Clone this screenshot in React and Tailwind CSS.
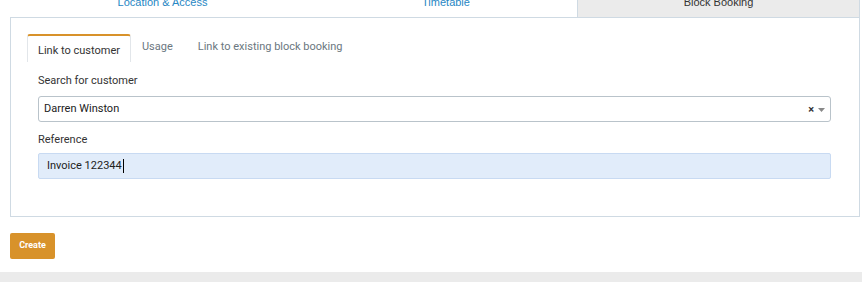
function TopTabs() {
  return (
    <div className="flex h-[17px] overflow-hidden ml-[10px] mr-[2px] font-['Liberation_Sans',Arial,sans-serif] text-[11px]">
      <div className="w-[305px] flex justify-center">
        <span className="mt-[-5px] leading-[14px] text-[#2787c4]">Location &amp; Access</span>
      </div>
      <div className="w-[262px] flex justify-center">
        <span className="mt-[-5px] leading-[14px] text-[#2787c4]">Timetable</span>
      </div>
      <div className="flex-1 flex justify-center bg-[#ebebeb] border-x border-[#cfdae3]">
        <span className="mt-[-5px] leading-[14px] text-[#333]">Block Booking</span>
      </div>
    </div>
  );
}

function InnerTabs() {
  return (
    <div className="flex items-start h-[28px] text-[11px]">
      <div className="h-[28px] px-[10px] bg-white border-t-2 border-x border-t-[#d8922a] border-x-[#e2e6ea] rounded-t-[3px] text-[#333] leading-[26px] pt-[2px]">
        Link to customer
      </div>
      <div className="pl-[11px] pr-[12px] text-[#6b7780] leading-[26px]">Usage</div>
      <div className="pl-[13px] text-[#6b7780] leading-[26px]">Link to existing block booking</div>
    </div>
  );
}

export default function App() {
  return (
    <div className="w-[862px] h-[282px] bg-white overflow-hidden font-['Roboto',sans-serif]">
      <TopTabs />
      <div className="ml-[10px] mr-[2px] border border-[#cfdae3] pt-[16px] px-[16px] pb-[37px]">
        <InnerTabs />
        <div className="pl-[11px] pr-[12px] pt-[11px] text-[11px]">
          <div className="leading-[16px] text-[#333]">Search for customer</div>
          <div className="mt-[7px] h-[26px] flex items-center border border-[#b9c3ca] rounded-[3px] pl-[5px] pr-[5px] text-[#222]">
            <span className="flex-1">Darren Winston</span>
            <span className="text-[11px] font-bold text-[#333] leading-none mr-[4px]">×</span>
            <svg width="7" height="4" viewBox="0 0 7 4" className="mt-[1px]">
              <path d="M0 0h7L3.5 4z" fill="#888" />
            </svg>
          </div>
          <div className="mt-[10px] leading-[16px] text-[#333]">Reference</div>
          <div className="mt-[5px] h-[26px] flex items-center bg-[#e1ecfa] border border-[#c8daf2] rounded-[2px] pl-[8px] text-[#222]">
            <span>Invoice 122344</span>
            <span className="w-px h-[14px] bg-black ml-px"></span>
          </div>
        </div>
      </div>
      <div className="flex px-[10px] mt-[16px]">
        <button className="w-[45px] h-[26px] bg-[#d8922a] rounded-[2px] text-white text-[9px] font-bold">
          Create
        </button>
      </div>
      <div className="mt-[13px] h-[10px] bg-[#ebebeb]"></div>
    </div>
  );
}
